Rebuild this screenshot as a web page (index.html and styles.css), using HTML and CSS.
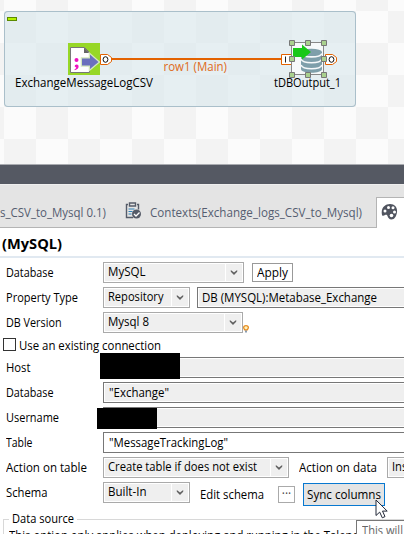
FILE: index.html
```html
<!DOCTYPE html>
<html lang="en">
<head>
<meta charset="utf-8">
<title>tDBOutput_1 component</title>
<link rel="stylesheet" href="styles.css">
</head>
<body>
<svg class="defs" width="0" height="0"><defs><path id="chev" d="M0.8 1v1.8L4 6l3.2-3.2V1L4 3.6Z" fill="#606060"/></defs></svg>
<main class="screen">
  <section class="canvas">
    <div class="subjob">
      <svg class="diagram" width="352" height="97" viewBox="4 11 352 97">
        <rect x="7.5" y="17.5" width="9" height="3" fill="#b4f000" stroke="#5b8a00"/>
        <rect x="68" y="43" width="32" height="32" fill="#97d726"/>
        <path d="M70.5 47.5h14l5 5v20h-19z" fill="#fff" stroke="#777" />
        <path d="M84 47.5l5.5 5.5H84z" fill="#666"/>
        <circle cx="76.5" cy="60" r="2" fill="#f010c0"/>
        <path d="M74.6 66.3a2 2 0 1 1 4 .3q0 2.600-3.800 3.600l-.3-1q1.800-.6 1.800-1.500z" fill="#f010c0"/>
        <path d="M82 58.500h8v-4l8.500 7.500-8.500 7v-3.500h-8z" fill="#6b70bd" stroke="#d5e8bd" stroke-width="2.500" paint-order="stroke"/>
        <path d="M111 59H282" stroke="#e36200" stroke-width="2"/>
        <path d="M100.500 54.500h7l4 3v4l-4 3h-7z" fill="#fff" stroke="#e36200"/>
        <ellipse cx="105.500" cy="59.500" rx="2.400" ry="2.800" fill="none" stroke="#111"/>
        <path d="M281.500 54.500h10v10h-10z" fill="#fff" stroke="#e36200"/>
        <path d="M285.500 56.500v6" stroke="#222"/>
        <path d="M325.500 54.500h7l4 3v4l-4 3h-7z" fill="#fff" stroke="#e36200"/>
        <ellipse cx="331.500" cy="59.500" rx="2.400" ry="2.800" fill="none" stroke="#111"/>
        <rect x="292" y="43" width="32" height="32" fill="#f6f9fa"/>
        <path d="M301 52v17c0 5 21 5 21 0V52z" fill="#7e9faa"/>
        <ellipse cx="311.500" cy="52" rx="10.500" ry="3.200" fill="#7e9faa"/>
        <path d="M301 53.500c2 4.500 19 4.500 21 0M301 59c2 5 19 5 21 0M301 65c2 5 19 5 21 0" fill="none" stroke="#f6f9fa" stroke-width="1.700"/>
        <path d="M293 48h9v-3.500l9 7.500-9 7.500V57h-9z" fill="#18c818"/>
        <rect x="291.500" y="42.500" width="32" height="32" fill="none" stroke="#888"/>
        <g fill="#a9d18e" stroke="#777"><path d="M289.500 40.500h5v5h-5zM305.500 40.500h5v5h-5zM321.500 40.500h5v5h-5zM289.500 56.500h5v5h-5zM321.500 56.500h5v5h-5zM289.500 72.500h5v5h-5zM305.500 72.500h5v5h-5zM321.500 72.500h5v5h-5z"/></g>
        <g class="node-text">
          <text x="15" y="87" textLength="138" lengthAdjust="spacingAndGlyphs">ExchangeMessageLogCSV</text>
          <text class="link" x="163.500" y="71" textLength="63.500" lengthAdjust="spacingAndGlyphs">row1 (Main)</text>
          <text x="274" y="87" textLength="67" lengthAdjust="spacingAndGlyphs">tDBOutput_1</text>
        </g>
      </svg>
    </div>
  </section>
  <div class="sash"></div>
  <nav class="tabs">
    <div class="tab job"><span data-w="106">s_CSV_to_Mysql 0.1)</span></div>
    <svg class="clip" width="17" height="18" viewBox="0 0 17 18" fill="none" stroke="#555b68"><path d="M3 3H1.500v13H8M12 3h1.500v5M4.500 1.500h6v3h-6z" stroke-width="1.400"/><path d="M3.500 7.500h6M3.500 10h4M3.500 12.500h3" stroke="#2d7fb5"/><circle cx="11.500" cy="12.500" r="4.500" fill="#555b68" stroke="none"/><path d="M9 12.500l2 2 3.500-3.500" stroke="#fff" stroke-width="1.300"/></svg>
    <div class="tab ctx"><span data-w="212">Contexts(Exchange_logs_CSV_to_Mysql)</span></div>
    <div class="tab active"><svg width="17" height="16" viewBox="0 0 17 16"><path d="M1 11C-.5 4 4 0 9 0c5 0 7.500 3.500 7 8-.4 4-2.500 7.500-5.500 7.500-2.500 0-3.500-2-4-3.500-.3-1.300-1.500-1.500-2.500-1-1 .8-2.500 1.400-3 0z" fill="#50545f"/><g fill="#fff"><circle cx="4" cy="7" r="1.500"/><circle cx="7.500" cy="3.500" r="1.500"/><circle cx="12" cy="3.700" r="1.500"/><circle cx="13.500" cy="8" r="1.500"/><circle cx="10.500" cy="11.500" r="1.800"/></g></svg></div>
  </nav>
  <h1><span data-w="60">(MySQL)</span></h1>
  <section class="form">
    <div class="row"><label><span data-w="47.500">Database</span></label><div class="combo w141"><span data-w="37.500">MySQL</span><i><svg width="8" height="7"><use href="#chev"/></svg></i></div><div class="apply"><span data-w="31">Apply</span></div></div>
    <div class="row"><label><span data-w="72">Property Type</span></label><div class="combo w87"><span data-w="55.500">Repository</span><i><svg width="8" height="7"><use href="#chev"/></svg></i></div><div class="field repo"><span data-w="175">DB (MYSQL):Metabase_Exchange</span></div></div>
    <div class="row"><label><span data-w="55.500">DB Version</span></label><div class="combo w140"><span data-w="41">Mysql 8</span><i><svg width="8" height="7"><use href="#chev"/></svg></i></div><svg class="bulb" width="6" height="9" viewBox="0 0 6 9"><path d="M.7 2Q1 .7 3 .7T5.300 2Q5.600 3.500 4 5H2Q.4 3.500.7 2z" fill="#fff0b8" stroke="#e58a20" stroke-width="1.300"/><path d="M2 5.500h2v2H2z" fill="#8b9cae"/></svg></div>
    <div class="row short"><div class="check"></div><span data-w="142">Use an existing connection</span></div>
    <div class="row"><label><span data-w="24.500">Host</span></label><div class="field host"><b class="mask"></b></div></div>
    <div class="row"><label><span data-w="47.500">Database</span></label><div class="field"><span data-w="60">"Exchange"</span></div></div>
    <div class="row"><label><span data-w="53">Username</span></label><div class="field user"><b class="mask"></b></div></div>
    <div class="row"><label><span data-w="26.500">Table</span></label><div class="field plain"><span data-w="119">"MessageTrackingLog"</span></div></div>
    <div class="row"><label><span data-w="81">Action on table</span></label><div class="combo w186"><span data-w="149">Create table if does not exist</span><i><svg width="8" height="7"><use href="#chev"/></svg></i></div><div class="data-label"><span data-w="78">Action on data</span></div><div class="combo cut"><span data-w="30">Insert</span></div></div>
    <div class="row schema"><label><span data-w="41.500">Schema</span></label><div class="combo w87"><span data-w="38.500">Built-In</span><i><svg width="8" height="7"><use href="#chev"/></svg></i></div><div class="edit"><span data-w="64">Edit schema</span></div><div class="dots">···</div><div class="sync"><span data-w="74">Sync columns</span>
      <svg class="cursor" width="13" height="20" viewBox="0 0 13 20"><path d="M1 1v15.500l3.700-3.400 2.600 5.700 2.700-1.200-2.500-5.500h4.700z" fill="#fff" stroke="#222838"/></svg></div></div>
  </section>
  <fieldset class="source"><legend><span data-w="62">Data source</span></legend><p><span data-w="398">This option only applies when deploying and running in the Talend Runtime</span></p></fieldset>
  <div class="tooltip"><span data-w="41">This will</span></div>
</main>
<script src="fit.js"></script>
</body>
</html>
```
FILE: styles.css
```css
* { box-sizing: border-box; }
body { margin: 0; background: #fff; font-family: "Open Sans", "Noto Sans", sans-serif; font-size: 12px; line-height: 16px; color: #000; }
.defs { position: absolute; }
.screen { position: relative; width: 404px; height: 534px; overflow: hidden; }
span[data-w] { display: inline-block; white-space: nowrap; transform-origin: 0 50%; }
.canvas { height: 164px; padding: 11px 0 0 4px; background: repeating-conic-gradient(#fbfbfb 0 25%, #f3f3f3 0 50%) 4px 11px / 64px 64px; }
.subjob { width: 350px; height: 96px; border-radius: 4px; background: rgba(214, 229, 235, .55); box-shadow: inset 0 0 0 1px #aabfca; }
.diagram { display: block; }
.node-text { font-size: 12.500px; fill: #000; }
.node-text .link { fill: #df6a20; }
.sash { height: 20px; background: #555963; border-top: 1px solid #a9abb0; }
.tabs { height: 44px; display: flex; align-items: flex-end; background: #e4e4e4; color: #555d70; border-top: 1px solid #eee; }
.tab { height: 31px; padding-top: 8px; border-bottom: 1px solid #b4b4b4; flex: none; }
.job { width: 125px; }
.clip { flex: none; height: 27px; padding-bottom: 7px; border-bottom: 1px solid #b4b4b4; overflow: visible; }
.ctx { width: 234px; padding-left: 8px; }
.active { width: 28px; padding: 6px 0 0 4px; background: #fff; border: solid #b4b4b4; border-width: 1px 0 0 1px; }
h1 { margin: 0; height: 30px; padding: 7px 0 0 2px; font-size: 14px; line-height: 17px; font-weight: 700; border-bottom: 2px solid #e1e9f1; }
.subjob { width: 352px; }
.form { padding: 2px 0 0; height: 253px; }
.row { height: 25px; display: flex; align-items: flex-start; padding-top: 2px; }
.row.short { height: 20px; }
.row > * { flex: none; }
label { width: 103px; padding: 3px 0 0 6px; }
.combo { height: 21px; padding: 1px 0 0 4px; display: flex; background: #efefef; border: 1px solid #aaa; box-shadow: inset 0 0 0 1px #fff; position: relative; }
.combo > span { flex: none; height: 16px; }
.combo i { position: absolute; right: 1px; top: 1px; width: 17px; height: 17px; border-left: 1px solid #fff; }
.combo i svg { display: block; margin: 5px 0 0 4px; }
.w141 { width: 141px; }
.w140 { width: 140px; }
.w87 { width: 87px; }
.w186 { width: 186px; }
.apply { width: 41px; height: 19px; margin: 1px 0 0 8px; padding: 1px 0 0 4px; border: 1px solid #999; }
.field { width: 310px; height: 21px; padding: 2px 0 0 5px; background: #efefef; border: 1px solid #777; box-shadow: inset 0 0 0 1px #fff; }
.repo { margin-left: 7px; padding-left: 4px; }
.plain { background: #fff; }
.bulb { margin: 13px 0 0 0; }
.check { width: 13px; height: 13px; margin: 1px 3px 0 3px; border: 1px solid #333; }
.check + span { margin-top: 1px; }
.mask { display: block; background: #000; position: relative; z-index: 1; }
.host .mask { width: 80px; height: 26px; margin: -7px 0 0 -9px; }
.user .mask { width: 60px; height: 21px; margin: -2px 0 0 -12px; }
.data-label { width: 98px; padding: 3px 0 0 10px; }
.cut { width: 40px; }
.edit { width: 88px; padding: 5px 0 0 10px; }
.dots { width: 17px; height: 17px; margin-top: 4px; border: 1px solid #aaa; text-align: center; line-height: 13px; color: #444; }
.sync { position: relative; width: 82px; height: 23px; margin: 1px 0 0 8px; padding: 3px 0 0 3px; background: #e4e4e4; border: 1px solid #0878d0; }
.cursor { position: absolute; left: 71px; top: 15px; z-index: 3; }
.source { margin: 0 -4px 0 3px; padding: 0; border: 1px solid #d8d8d8; border-bottom: 0; height: 40px; min-width: 0; }
.source legend { margin-left: 5px; padding: 0 3px; height: 16px; width: 68px; }
.source p { margin: 1px 0 0 5px; }
.tooltip { position: absolute; left: 356px; top: 520px; width: 60px; height: 22px; padding: 2px 0 0 5px; background: #fff; border: 1px solid #777; color: #666; }
```
FILE: fit.js
```js
// Condense each label to its declared advance width.
document.querySelectorAll("span[data-w]").forEach(function (el) {
  var w = parseFloat(el.dataset.w);
  el.style.transform = "scaleX(" + w / el.getBoundingClientRect().width + ")";
});
```
